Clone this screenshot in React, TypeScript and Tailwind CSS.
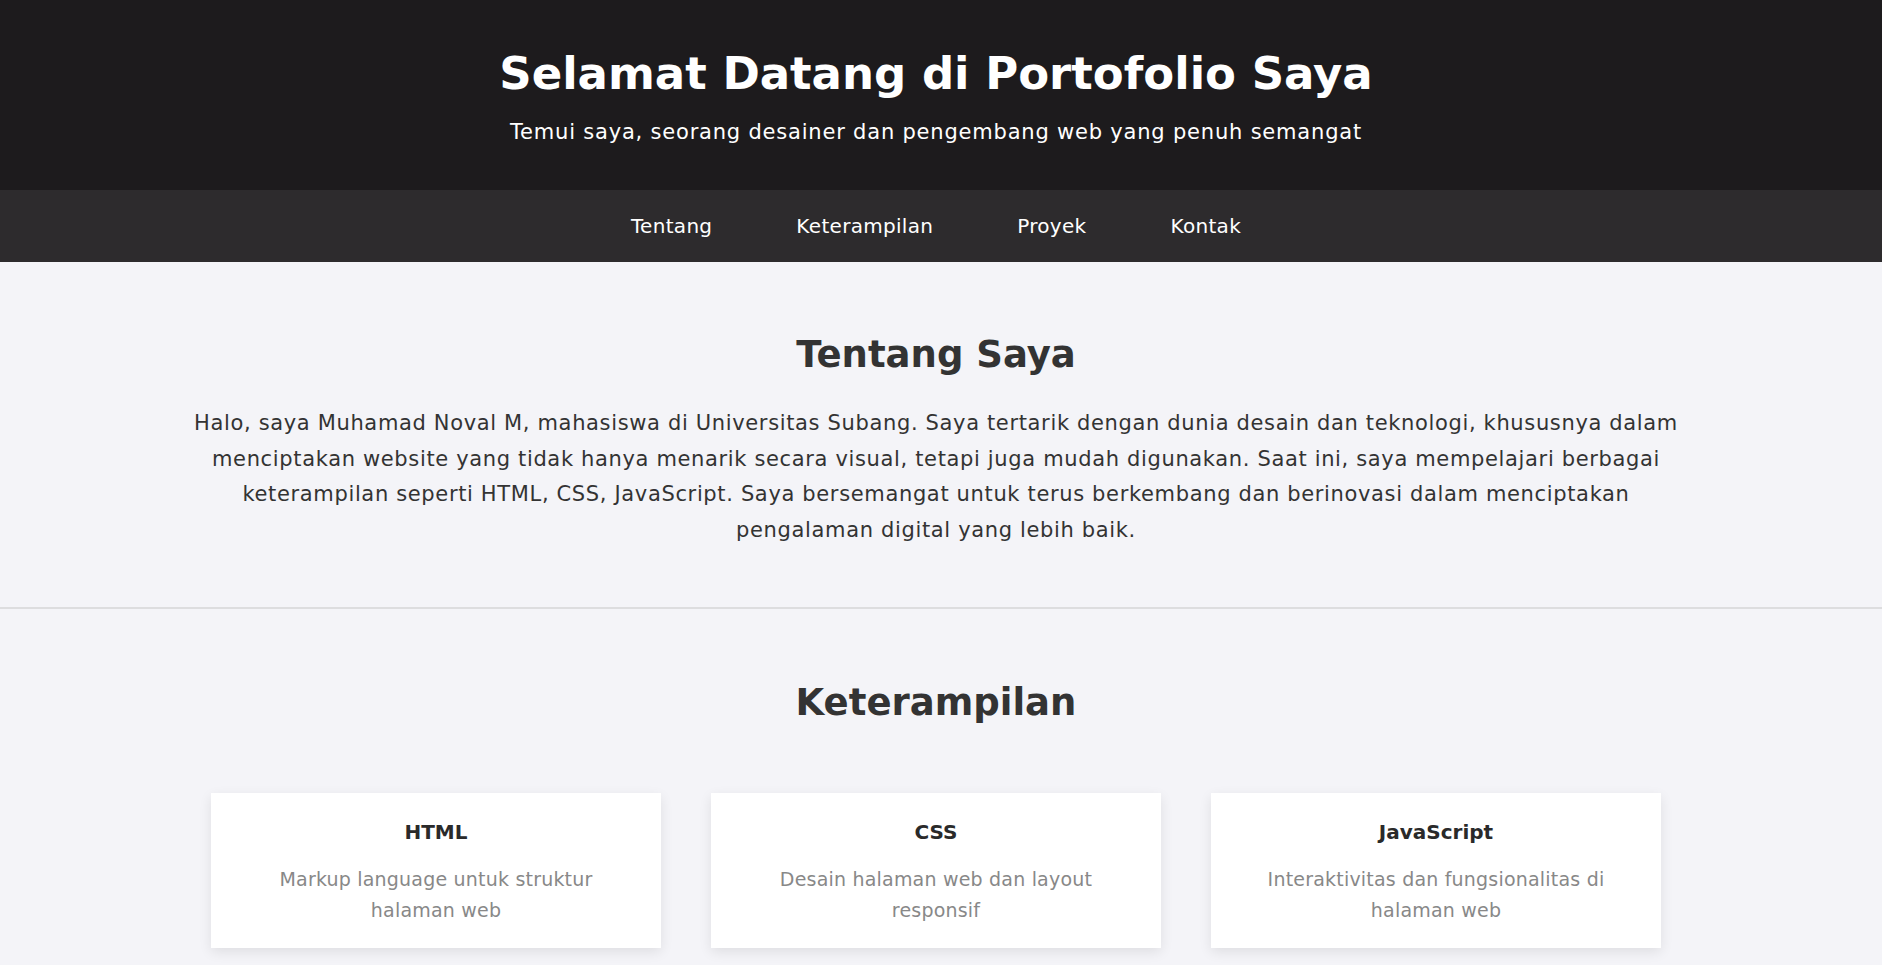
const skills = [
  { title: 'HTML', text: 'Markup language untuk struktur halaman web' },
  { title: 'CSS', text: 'Desain halaman web dan layout responsif' },
  { title: 'JavaScript', text: 'Interaktivitas dan fungsionalitas di halaman web' },
] as const

const navLinks = ['Tentang', 'Keterampilan', 'Proyek', 'Kontak'] as const

export default function App() {
  return (
    <div className="min-h-screen bg-[#f4f4f8] font-['DejaVu_Sans','Noto_Sans',sans-serif] text-[#333]">
      <header className="flex h-[190px] flex-col items-center bg-[#1d1b1d] pt-[45px] pr-[10px] text-white">
        <h1 className="text-[45px] leading-[58px] font-bold">Selamat Datang di Portofolio Saya</h1>
        <p className="mt-[14px] text-[21px] leading-[30px] tracking-[0.8px]">
          Temui saya, seorang desainer dan pengembang web yang penuh semangat
        </p>
      </header>

      <nav className="flex h-[72px] items-center justify-center gap-[84px] bg-[#2d2b2d] pr-[10px] text-[20px] tracking-[0.3px] text-white">
        {navLinks.map((link) => (
          <a key={link} href={`#${link.toLowerCase()}`}>
            {link}
          </a>
        ))}
      </nav>

      <section id="tentang" className="border-b-2 border-[#dddddf] pt-[69px] pr-[10px] pb-[59px] text-center">
        <h2 className="text-[37px] leading-[48px] font-bold">Tentang Saya</h2>
        <p className="mx-auto mt-[27px] max-w-[1500px] text-[21px] leading-[35.5px] tracking-[0.65px]">
          Halo, saya Muhamad Noval M, mahasiswa di Universitas Subang. Saya tertarik dengan dunia desain dan
          teknologi, khususnya dalam menciptakan website yang tidak hanya menarik secara visual, tetapi juga mudah
          digunakan. Saat ini, saya mempelajari berbagai keterampilan seperti HTML, CSS, JavaScript. Saya
          bersemangat untuk terus berkembang dan berinovasi dalam menciptakan pengalaman digital yang lebih baik.
        </p>
      </section>

      <section id="keterampilan" className="pt-[70px] pr-[10px] pb-[40px] text-center">
        <h2 className="text-[37px] leading-[48px] font-bold">Keterampilan</h2>
        <ul className="mx-auto mt-[66px] flex w-[1450px] list-none justify-between p-0">
          {skills.map((skill) => (
            <li
              key={skill.title}
              className="h-[155px] w-[450px] bg-white px-[40px] pt-[24px] shadow-[0_4px_12px_rgba(0,0,0,0.09)]"
            >
              <h3 className="text-[20px] leading-[30px] font-bold text-[#2a2a2a]">{skill.title}</h3>
              <p className="mt-[17px] text-[19px] leading-[31px] tracking-[0.2px] text-[#888]">{skill.text}</p>
            </li>
          ))}
        </ul>
      </section>
    </div>
  )
}
